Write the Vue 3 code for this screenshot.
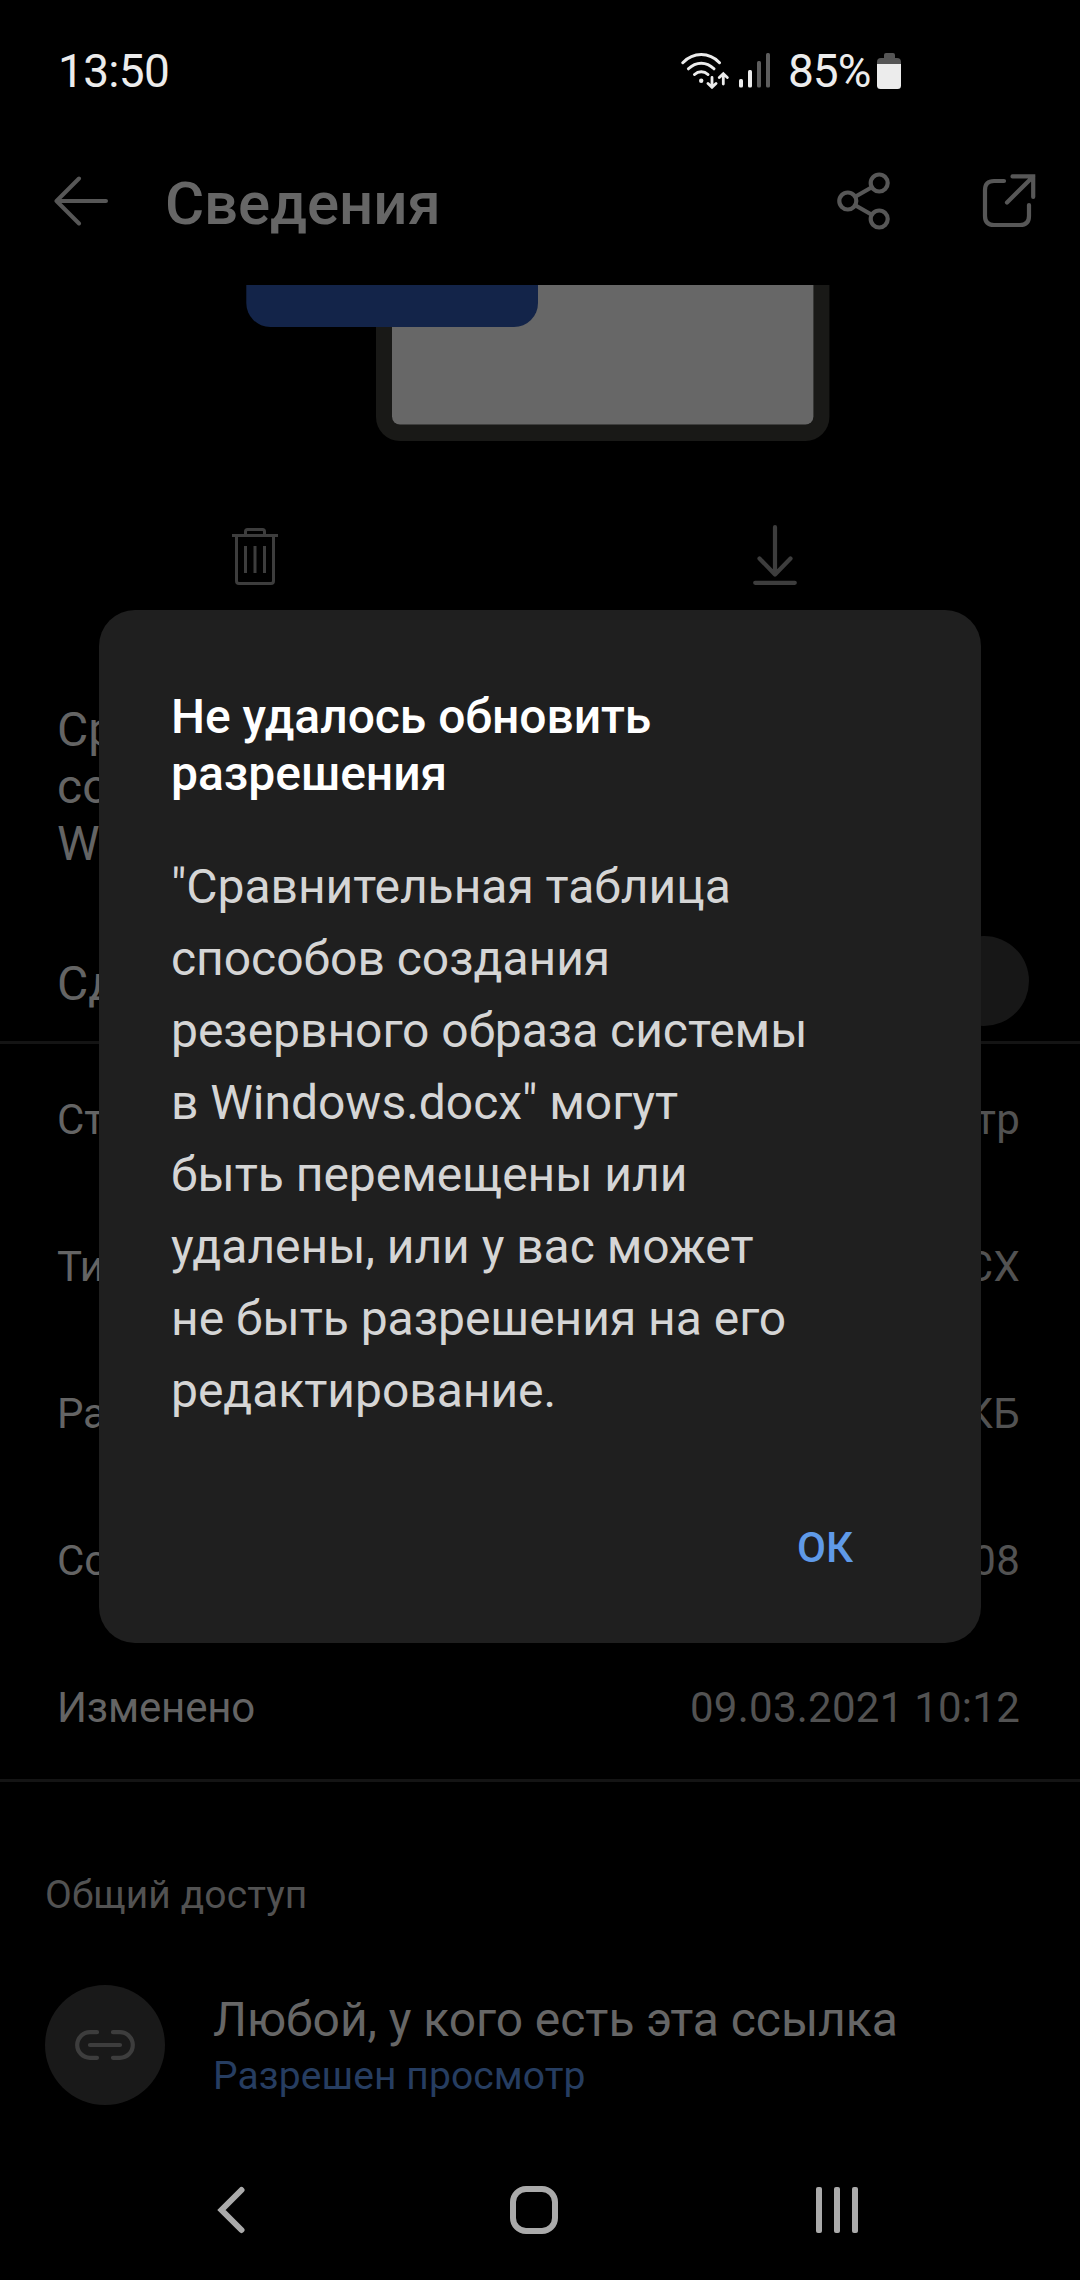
<script setup>
import { ref } from 'vue';

const showDialog = ref(true);

const fileName = ['Срав', 'созд', 'Wind'];

const details = [
  { label: 'Стат', value: 'мотр' },
  { label: 'Тип', value: 'DOCX' },
  { label: 'Разм', value: 'КБ' },
  { label: 'Созд', value: '10:08' },
  { label: 'Изменено', value: '09.03.2021 10:12' }
];

const messageLines = [
  '"Сравнительная таблица',
  'способов создания',
  'резервного образа системы',
  'в Windows.docx" могут',
  'быть перемещены или',
  'удалены, или у вас может',
  'не быть разрешения на его',
  'редактирование.'
];

const closeDialog = () => {
  showDialog.value = false;
};
</script>

<template>
  <div class="screen">
    <div class="status-bar">
      <span class="clock">13:50</span>
      <div class="status-icons">
        <svg class="wifi" width="48" height="36" viewBox="0 0 48 36" fill="none" stroke="#ececec" stroke-linecap="round">
          <path d="M1.8 9.7C12.5 -1.1 28 -1.1 38.5 9.7" stroke-width="3" />
          <path d="M7.4 15.8C15 8.3 25.5 8.3 33 15.8" stroke-width="3" />
          <path d="M13.5 21.5C17.5 17.7 23 17.7 27 21.5" stroke-width="3" />
          <circle cx="20.2" cy="27.7" r="2.2" fill="#ececec" stroke="none" />
          <path d="M31 24.5V34M27 30.5L31 34.3L35 30.5" stroke-width="2.8" />
          <path d="M42.3 31V21M38.3 24.5L42.3 20.7L46.3 24.5" stroke-width="2.8" />
        </svg>
        <svg class="signal" width="32" height="35" viewBox="0 0 32 35">
          <rect x="0" y="26" width="4" height="8.5" rx="1.5" fill="#ececec" />
          <rect x="9" y="17" width="4" height="17.5" rx="1.5" fill="#ececec" />
          <rect x="18" y="8" width="4" height="26.5" rx="1.5" fill="#5d5d5d" />
          <rect x="27" y="0" width="4" height="34.5" rx="1.5" fill="#5d5d5d" />
        </svg>
        <span class="percent">85%</span>
        <svg class="battery" width="24" height="36" viewBox="0 0 24 36">
          <path d="M0 11V9Q0 5 4 5H7V2Q7 0 9 0H16Q18 0 18 2V5H20Q24 5 24 9V11Z" fill="#555" />
          <path d="M0 11H24V32.5Q24 36 20.5 36H3.5Q0 36 0 32.5Z" fill="#ececec" />
        </svg>
      </div>
    </div>

    <div class="toolbar">
      <svg class="back" width="54" height="50" viewBox="0 0 54 50" fill="none" stroke="#575757" stroke-width="4" stroke-linecap="round" stroke-linejoin="round">
        <path d="M52 25H2.5M25 2.5L2.5 25L25 47.5" />
      </svg>
      <h1 class="heading">Сведения</h1>
      <svg class="share" width="54" height="58" viewBox="0 0 54 58" fill="none" stroke="#575757" stroke-width="4.2">
        <circle cx="10.8" cy="29" r="8.5" />
        <circle cx="42.2" cy="11" r="8.5" />
        <circle cx="42.2" cy="47" r="8.5" />
        <path d="M18.2 24.8L34.8 15.2M18.2 33.2L34.8 42.8" />
      </svg>
      <svg class="open" width="54" height="54" viewBox="0 0 54 54" fill="none" stroke="#575757" stroke-width="4.2" stroke-linecap="round">
        <path d="M22 7H12Q3 7 3 16V42Q3 51 12 51H38Q47 51 47 42V31" />
        <path d="M30.5 2.4H51.2V23M51.2 2.4L25 28.5" />
      </svg>
    </div>

    <svg class="preview" width="1080" height="156" viewBox="0 0 1080 156">
      <path d="M376 0H829.4V132A24 24 0 0 1 805.4 156H400A24 24 0 0 1 376 132Z" fill="#191917" />
      <path d="M392 0H813.4V131.500A8 8 0 0 1 805.4 139.500H400A8 8 0 0 1 392 131.500Z" fill="#676767" />
      <path d="M246.3 0H538V18A24 24 0 0 1 514 42H270.3A24 24 0 0 1 246.3 18Z" fill="#132449" />
    </svg>

    <div class="actions">
      <svg width="46" height="60" viewBox="0 0 46 60" fill="none" stroke="#3d3d3d" stroke-width="3">
        <path d="M0 10.5H46" />
        <path d="M13.5 10V6.5Q13.5 4.5 15.5 4.5H30.5Q32.5 4.5 32.5 6.5V10" />
        <path d="M4.5 11V56Q4.5 58.5 7 58.5H39Q41.5 58.5 41.5 56V11" />
        <path d="M13.5 21V48M23 21V48M32.5 21V48" />
      </svg>
      <svg width="44" height="60" viewBox="0 0 44 60" fill="none" stroke="#3d3d3d" stroke-width="4.2" stroke-linecap="round" stroke-linejoin="round">
        <path d="M22 2.2V49M6.5 33.5L22 49.5L37.5 33.5M2.2 57.8H41.8" />
      </svg>
    </div>

    <div class="file-name">
      <div v-for="line in fileName" :key="line">{{ line }}</div>
    </div>

    <div class="offline">
      <span class="offline-label">Сдел</span>
      <span class="switch"></span>
    </div>

    <div class="details">
      <div v-for="item in details" :key="item.label" class="detail">
        <span class="detail-label">{{ item.label }}</span>
        <span class="detail-value">{{ item.value }}</span>
      </div>
    </div>

    <div class="access">
      <h2 class="access-heading">Общий доступ</h2>
      <div class="access-item">
        <div class="access-icon">
          <svg width="60" height="30" viewBox="0 0 60 30" fill="none" stroke="#3d3d3d" stroke-width="4.2" stroke-linecap="round">
            <path d="M22 2.2H15A12.8 12.8 0 0 0 15 27.8H22M38 2.2H45A12.8 12.8 0 0 1 45 27.8H38M15 15H45" />
          </svg>
        </div>
        <div>
          <div class="access-name">Любой, у кого есть эта ссылка</div>
          <div class="access-role">Разрешен просмотр</div>
        </div>
      </div>
    </div>

    <div class="nav-bar">
      <svg class="nav-back" width="28" height="48" viewBox="0 0 28 48" fill="none" stroke="#aaaaaa" stroke-width="6" stroke-linecap="round">
        <path d="M24.5 4L4.5 24L24.5 44" />
      </svg>
      <svg class="nav-home" width="48" height="48" viewBox="0 0 48 48" fill="none" stroke="#aaaaaa" stroke-width="6">
        <rect x="3" y="3" width="42" height="42" rx="13" />
      </svg>
      <svg class="nav-recent" width="42" height="48" viewBox="0 0 42 48" fill="#aaaaaa">
        <rect x="0" y="1" width="6" height="46" rx="2" />
        <rect x="18" y="1" width="6" height="46" rx="2" />
        <rect x="36" y="1" width="6" height="46" rx="2" />
      </svg>
    </div>

    <div v-if="showDialog" class="dialog-mask">
      <div class="dialog">
        <h3 class="dialog-title">Не удалось обновить<br />разрешения</h3>
        <div class="dialog-body">
          <div v-for="line in messageLines" :key="line">{{ line }}</div>
        </div>
        <div class="dialog-footer">
          <button class="dialog-button" @click="closeDialog">ОК</button>
        </div>
      </div>
    </div>
  </div>
</template>

<style>
body {
  margin: 0;
  background-color: #000;
}
</style>

<style scoped>
.screen {
  position: relative;
  width: 1080px;
  height: 2280px;
  overflow: hidden;
  background-color: #000;
  color: #646464;
  font-family: Roboto, "Noto Sans", sans-serif;
  white-space: nowrap;
}

svg {
  display: block;
  flex: none;
}

h1,
h2,
h3 {
  margin: 0;
}

.status-bar {
  display: flex;
  align-items: center;
  justify-content: space-between;
  height: 141px;
  padding: 0 179px 0 58px;
  box-sizing: border-box;
  color: #ececec;
  font-size: 46px;
}

.clock {
  letter-spacing: -0.7px;
}

.status-icons {
  display: flex;
  align-items: center;
}

.signal {
  margin-left: 10px;
}

.percent {
  width: 82px;
  margin-left: 17px;
  letter-spacing: -1px;
}

.battery {
  margin-left: 7px;
}

.toolbar {
  display: flex;
  align-items: center;
  height: 120px;
  margin-bottom: 24px;
  padding: 0 44px 0 54px;
}

.heading {
  flex: 1;
  margin-left: 57px;
  padding-top: 5px;
  color: #666;
  font-size: 60px;
  font-weight: 500;
  letter-spacing: -0.1px;
}

.open {
  margin-left: 91px;
}

.actions {
  display: grid;
  grid-template-columns: 510px 530px;
  justify-items: center;
  height: 176px;
  padding-top: 84px;
}

.file-name {
  padding: 0 57px;
  font-size: 48px;
  line-height: 57px;
}

.offline {
  display: flex;
  align-items: center;
  justify-content: space-between;
  height: 90px;
  margin-top: 64px;
  padding: 0 51px 15px 57px;
  border-bottom: 3px solid #141414;
  font-size: 48px;
}

.offline-label {
  padding-top: 5px;
}

.switch {
  width: 90px;
  height: 90px;
  border-radius: 45px;
  background-color: #171717;
}

.details {
  display: flex;
  flex-direction: column;
  gap: 97px;
  padding: 51px 60px 46px 57px;
  border-bottom: 3px solid #141414;
  font-size: 42px;
  line-height: 50px;
}

.detail {
  display: flex;
  justify-content: space-between;
}

.detail-label {
  letter-spacing: -0.15px;
}

.detail-value {
  color: #525252;
  letter-spacing: 0.25px;
}

.access {
  height: 316px;
  padding: 88px 45px 0;
}

.access-heading {
  color: #525252;
  font-size: 39px;
  font-weight: 400;
  line-height: 50px;
  letter-spacing: 0.1px;
}

.access-item {
  display: flex;
  align-items: center;
  gap: 48px;
  margin-top: 65px;
}

.access-icon {
  display: flex;
  align-items: center;
  justify-content: center;
  width: 120px;
  height: 120px;
  border-radius: 50%;
  background-color: #191919;
}

.access-name {
  color: #666;
  font-size: 48px;
  line-height: 60px;
  letter-spacing: -0.05px;
}

.access-role {
  margin: 1px 0 -1px;
  color: #263d61;
  font-size: 39px;
  line-height: 51px;
  letter-spacing: 0.1px;
}

.nav-bar {
  display: flex;
}

.nav-back {
  margin-left: 217px;
}

.nav-home {
  margin-left: 265px;
}

.nav-recent {
  margin-left: 258px;
}

.dialog-mask {
  position: absolute;
  top: 0;
  left: 0;
  display: flex;
  align-items: flex-start;
  justify-content: center;
  width: 100%;
  height: 100%;
  padding-top: 610px;
}

.dialog {
  width: 882px;
  height: 1033px;
  padding: 78px 72px 0;
  box-sizing: border-box;
  border-radius: 36px;
  background-color: #1f1f1f;
}

.dialog-title {
  color: #fff;
  font-size: 48px;
  font-weight: 500;
  line-height: 57px;
  letter-spacing: -0.04px;
}

.dialog-body {
  margin-top: 49px;
  color: #d5d5d5;
  font-size: 48px;
  line-height: 72px;
  letter-spacing: -0.03px;
}

.dialog-footer {
  display: flex;
  justify-content: flex-end;
  margin-top: 91px;
  padding-right: 56px;
}

.dialog-button {
  padding: 0;
  border: none;
  background: none;
  color: #5f9ae8;
  font-family: inherit;
  font-size: 42px;
  font-weight: 500;
  line-height: 60px;
}
</style>
